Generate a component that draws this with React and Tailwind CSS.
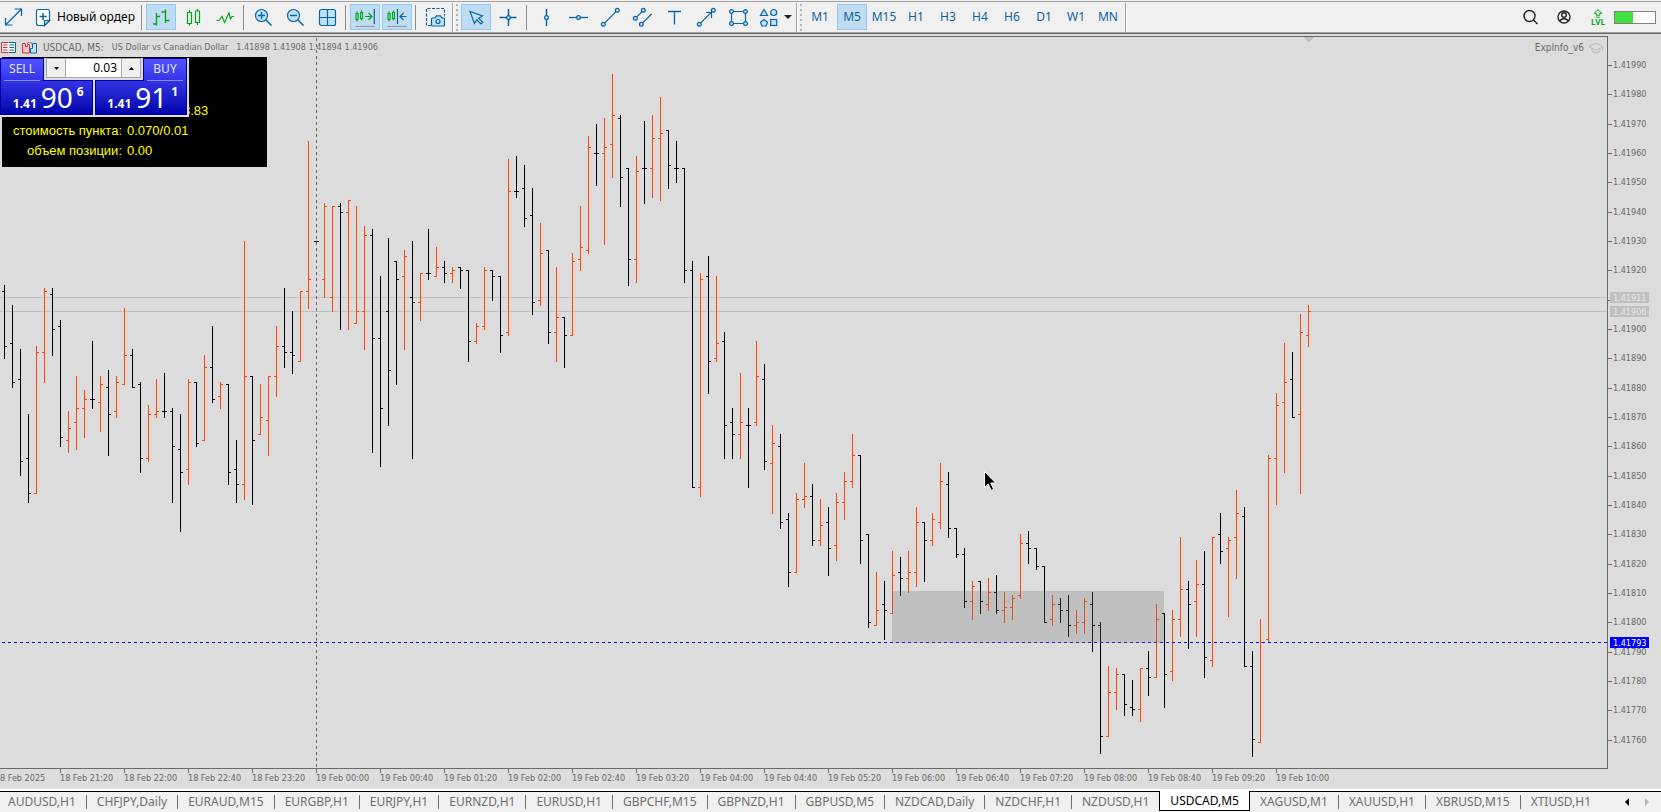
import { useState } from 'react'
import { clsx } from 'clsx'
import { GraduationCap } from 'lucide-react'

const UP = '#ff4500'
const DOWN = '#000000'
const BAR_STEP = 8
const PLOT_TOP = 37

// [up, open, high, low, close]
const BARS = [
  [0, 291, 285, 359, 346], [0, 343, 305, 388, 382], [0, 379, 349, 476, 461], [0, 458, 414, 503, 493],
  [1, 493, 346, 494, 352], [1, 352, 288, 383, 291], [0, 294, 288, 356, 329], [0, 326, 320, 447, 437],
  [1, 440, 411, 453, 428], [1, 422, 376, 450, 408], [1, 408, 390, 438, 399], [0, 399, 341, 409, 399],
  [1, 402, 376, 432, 384], [0, 387, 370, 456, 414], [1, 411, 376, 418, 382], [1, 384, 308, 385, 355],
  [0, 355, 349, 388, 387], [0, 384, 382, 473, 458], [1, 458, 405, 462, 414], [1, 414, 379, 418, 411],
  [0, 411, 373, 418, 411], [0, 411, 408, 503, 446], [0, 449, 414, 532, 472], [1, 469, 379, 485, 382],
  [0, 382, 382, 447, 443], [1, 440, 355, 441, 367], [0, 367, 326, 403, 399], [1, 396, 382, 409, 384],
  [0, 384, 384, 485, 472], [0, 469, 440, 503, 484], [1, 484, 241, 500, 376], [0, 376, 376, 505, 440],
  [1, 434, 384, 435, 417], [1, 420, 376, 456, 376], [1, 376, 326, 397, 346], [0, 346, 288, 368, 352],
  [0, 352, 311, 374, 355], [1, 361, 291, 362, 291], [1, 291, 141, 309, 279], [0, 241, 241, 242, 241],
  [1, 279, 203, 298, 206], [1, 297, 206, 312, 206], [0, 206, 203, 330, 212], [1, 212, 200, 330, 200],
  [1, 323, 206, 324, 311], [1, 311, 226, 350, 235], [0, 235, 229, 453, 338], [0, 338, 276, 467, 408],
  [0, 311, 238, 426, 370], [0, 261, 261, 385, 279], [1, 276, 250, 350, 256], [0, 297, 241, 459, 302],
  [1, 302, 273, 321, 273], [0, 273, 229, 280, 273], [1, 276, 247, 277, 267], [0, 267, 261, 283, 273],
  [1, 273, 267, 283, 270], [0, 267, 267, 289, 270], [0, 270, 270, 362, 341], [1, 341, 323, 344, 326],
  [1, 326, 267, 330, 270], [0, 270, 270, 301, 276], [0, 276, 276, 353, 335], [1, 332, 159, 336, 191],
  [0, 191, 156, 198, 191], [0, 188, 165, 227, 218], [0, 215, 188, 315, 302], [1, 300, 223, 306, 253],
  [0, 250, 250, 344, 332], [1, 332, 267, 362, 317], [0, 317, 317, 368, 335], [1, 335, 253, 336, 261],
  [1, 259, 206, 271, 247], [1, 250, 136, 254, 147], [0, 153, 124, 186, 153], [1, 153, 118, 245, 147],
  [1, 144, 74, 178, 115], [0, 118, 115, 207, 177], [0, 168, 168, 286, 259], [1, 259, 156, 283, 171],
  [0, 168, 121, 204, 168], [1, 168, 115, 198, 138], [1, 138, 97, 201, 133], [0, 130, 130, 189, 165],
  [0, 168, 141, 183, 168], [0, 168, 168, 283, 270], [0, 270, 261, 488, 487], [1, 487, 273, 497, 279],
  [0, 276, 256, 394, 361], [1, 358, 276, 362, 343], [0, 341, 332, 459, 425], [0, 422, 408, 459, 434],
  [1, 434, 373, 459, 422], [0, 425, 408, 488, 425], [1, 422, 341, 426, 376], [0, 379, 364, 470, 461],
  [1, 463, 425, 514, 443], [0, 446, 434, 529, 522], [0, 519, 513, 587, 572], [1, 572, 493, 573, 499],
  [1, 499, 463, 508, 496], [0, 496, 484, 546, 540], [1, 540, 499, 546, 525], [0, 522, 507, 576, 548],
  [1, 545, 493, 561, 502], [1, 502, 472, 520, 481], [1, 481, 434, 488, 455], [0, 455, 455, 564, 540],
  [0, 534, 534, 628, 622], [1, 625, 572, 626, 610], [0, 604, 581, 640, 610], [1, 613, 551, 614, 575],
  [0, 572, 557, 596, 578], [1, 578, 551, 593, 572], [1, 572, 507, 587, 522], [0, 522, 522, 582, 540],
  [1, 540, 513, 546, 519], [1, 522, 463, 529, 481], [0, 484, 472, 538, 528], [0, 528, 528, 558, 554],
  [0, 554, 548, 608, 601], [1, 601, 581, 620, 586], [0, 581, 581, 614, 601], [1, 604, 578, 611, 592],
  [0, 592, 575, 614, 610], [1, 610, 592, 623, 607], [1, 607, 595, 620, 598], [1, 595, 534, 599, 543],
  [0, 543, 531, 564, 548], [0, 548, 548, 570, 566], [0, 566, 566, 623, 622], [1, 619, 595, 626, 604],
  [0, 604, 598, 623, 610], [0, 610, 595, 637, 625], [1, 625, 610, 634, 622], [1, 622, 598, 634, 601],
  [0, 604, 592, 652, 625], [0, 625, 622, 754, 736], [1, 736, 666, 737, 692], [1, 692, 668, 710, 674],
  [0, 674, 674, 716, 704], [0, 707, 680, 716, 709], [1, 709, 668, 722, 668], [0, 668, 651, 696, 677],
  [1, 677, 604, 678, 619], [0, 613, 613, 708, 674], [1, 671, 610, 681, 619], [1, 619, 537, 637, 589],
  [0, 589, 581, 649, 604], [1, 601, 560, 637, 584], [0, 584, 551, 678, 657], [1, 660, 537, 667, 537],
  [0, 534, 513, 564, 551], [1, 548, 537, 617, 540], [1, 537, 490, 579, 513], [0, 516, 507, 667, 666],
  [0, 666, 651, 757, 739], [1, 742, 619, 743, 642], [1, 639, 455, 642, 458], [1, 458, 393, 505, 405],
  [1, 402, 343, 473, 382], [0, 379, 352, 418, 417], [1, 414, 314, 494, 332], [1, 335, 305, 347, 311],
]

const PRICES = Array.from({ length: 24 }, (_, i) => ({
  label: ((141990 - i * 10) / 100000).toFixed(5),
  y: Math.floor(65 + (i * 88) / 3 + 0.4),
}))

const TIMES = [
  '8 Feb 2025', '18 Feb 21:20', '18 Feb 22:00', '18 Feb 22:40', '18 Feb 23:20', '19 Feb 00:00', '19 Feb 00:40',
  '19 Feb 01:20', '19 Feb 02:00', '19 Feb 02:40', '19 Feb 03:20', '19 Feb 04:00', '19 Feb 04:40', '19 Feb 05:20',
  '19 Feb 06:00', '19 Feb 06:40', '19 Feb 07:20', '19 Feb 08:00', '19 Feb 08:40', '19 Feb 09:20', '19 Feb 10:00',
]

const PERIODS = ['M1', 'M5', 'M15', 'H1', 'H3', 'H4', 'H6', 'D1', 'W1', 'MN']

const TABS = [
  'AUDUSD,H1', 'CHFJPY,Daily', 'EURAUD,M15', 'EURGBP,H1', 'EURJPY,H1', 'EURNZD,H1', 'EURUSD,H1', 'GBPCHF,M15',
  'GBPNZD,H1', 'GBPUSD,M5', 'NZDCAD,Daily', 'NZDCHF,H1', 'NZDUSD,H1', 'USDCAD,M5', 'XAGUSD,M1', 'XAUUSD,H1',
  'XBRUSD,M15', 'XTIUSD,H1',
]

const BLUE = '#0a64a4'
const GREEN = '#00a81c'
const PALE = '#bfe3fa'

function Icon({ children, color = BLUE }) {
  return (
    <svg viewBox="0 0 20 20" className="w-5 h-5 shrink-0" fill="none" stroke={color} strokeWidth="1.2">
      {children}
    </svg>
  )
}

function Node({ x, y }) {
  return <circle cx={x} cy={y} r="1.9" fill={PALE} />
}

const ICONS = {
  expand: (
    <Icon>
      <path d="M2.5 18 18.5 2M11.5 2h7v7M2.5 11v7h7" />
    </Icon>
  ),
  order: (
    <Icon>
      <path d="M5.500 2.500h9q2 0 2 2v9l-5 5h-6q-2 0-2-2v-12q0-2 2-2z" fill="#fff" />
      <path d="M16.500 13.500h-5v5z" fill={PALE} />
      <path d="M6.500 9.500h7M10 6v7" strokeWidth="1.5" />
    </Icon>
  ),
  bars: (
    <Icon color={GREEN}>
      <path d="M5.500 6v12.500M2 17h3.500M5.500 9.500h3.500M14.500 2.500v13.500M10.500 5h4M14.500 13.500h4" strokeWidth="1.4" />
    </Icon>
  ),
  candles: (
    <Icon color={GREEN}>
      <path d="M4.500 5.500h4v11h-4zM6.500 3v2.500M6.500 16.500v2M12.500 4h4v11.500h-4zM14.500 2v2M14.500 15.500v2.500" />
    </Icon>
  ),
  line: (
    <Icon color={GREEN}>
      <path d="M1.500 13.500 4 13.500 7 9.500 9.500 15.500 14 6 15.500 12 17 9.500H19" />
    </Icon>
  ),
  zoomIn: (
    <Icon>
      <circle cx="8.500" cy="8.500" r="6" fill={PALE} />
      <path d="M5 8.500h7M8.500 5v7M13 13l5.500 5.500" strokeWidth="1.500" />
    </Icon>
  ),
  zoomOut: (
    <Icon>
      <circle cx="8.500" cy="8.500" r="6" fill={PALE} />
      <path d="M5 8.500h7M13 13l5.500 5.500" strokeWidth="1.500" />
    </Icon>
  ),
  grid: (
    <Icon>
      <rect x="2.500" y="2.500" width="16" height="16" rx="2" fill={PALE} />
      <path d="M10.500 2.500v16M2.500 10.500h16" />
    </Icon>
  ),
  shiftEnd: (
    <Icon color={GREEN}>
      <path d="M1 6.500h2v6h-2zM2 4.500v2M2 12.500v2M5.500 5.500h2v6h-2zM6.500 3.500v2M6.500 11.500v2M10 9.500h7M13.500 6l3.500 3.500-3.500 3.500" />
      <path d="M19.300 2v15" stroke={BLUE} />
      <path d="M0.500 19.500h19" stroke="#999" />
    </Icon>
  ),
  shiftGap: (
    <Icon color={GREEN}>
      <path d="M1 6.500h2v6h-2zM2 4.500v2M2 12.500v2M5.500 5.500h2v6h-2zM6.500 3.500v2M6.500 11.500v2" />
      <path d="M10.500 2v15M19.500 9.500h-6M16.500 6l-3.500 3.500 3.500 3.500" stroke={BLUE} />
      <path d="M0.500 19.500h19" stroke="#999" />
    </Icon>
  ),
  camera: (
    <Icon>
      <path d="M6 18.500h-4.500v-17h18v8" strokeDasharray="3 1.500" />
      <path d="M7.500 11h2.500l1.500-2.200h4l1.500 2.200h1.500q1 0 1 1v6q0 1-1 1h-11q-1 0-1-1v-6q0-1 1-1z" fill={PALE} />
      <circle cx="13" cy="14.500" r="2" />
    </Icon>
  ),
  cursor: (
    <Icon>
      <path d="M4 4.500 8.500 16.500 10.800 12.800 15 17 16.800 15.300 12.700 11.200 16.500 9z" fill={PALE} />
    </Icon>
  ),
  crosshair: (
    <Icon>
      <path d="M1.500 10.500h17M10.500 2v17" strokeWidth="1.500" />
      <Node x={10.5} y={10.5} />
    </Icon>
  ),
  vline: (
    <Icon>
      <path d="M10.500 2v17" strokeWidth="1.500" />
      <Node x={10.5} y={10.5} />
    </Icon>
  ),
  hline: (
    <Icon>
      <path d="M1 10.500h19" strokeWidth="1.300" />
      <Node x={10.5} y={10.5} />
    </Icon>
  ),
  trend: (
    <Icon>
      <path d="M3.300 17.300l14-14" />
      <Node x={3.3} y={17.3} />
      <Node x={17.3} y={3.3} />
    </Icon>
  ),
  channel: (
    <Icon>
      <path d="M3.300 11.300l8-8M9.300 17.300 19.600 7" />
      <Node x={3.3} y={11.3} />
      <Node x={11.3} y={3.3} />
      <Node x={9.3} y={17.3} />
    </Icon>
  ),
  label: (
    <Icon>
      <path d="M4 4.500h13M10.500 4.500v13" strokeWidth="1.300" />
    </Icon>
  ),
  arrow: (
    <Icon>
      <path d="M3.300 17.300l14-14M10 5.500h5.500v5.500" />
      <Node x={3.3} y={17.3} />
      <Node x={17.3} y={3.3} />
    </Icon>
  ),
  rect: (
    <Icon>
      <path d="M3.500 4.500h14v12h-14z" />
      <Node x={3.5} y={4.5} />
      <Node x={17.5} y={4.5} />
      <Node x={3.5} y={16.5} />
      <Node x={17.5} y={16.5} />
    </Icon>
  ),
  shapes: (
    <Icon>
      <path d="M6 2.500l3.500 6h-7z" fill={PALE} />
      <circle cx="15.700" cy="5.500" r="3" fill={PALE} />
      <path d="M6 12.500l3.500 2.700-1.300 3.800h-4.400l-1.300-3.800z" fill={PALE} />
      <rect x="12.700" y="12.500" width="6" height="6" fill={PALE} />
    </Icon>
  ),
}

function ToolButton({ icon, title, active }) {
  return (
    <button
      title={title}
      className={clsx(
        'w-[30px] h-[26px] shrink-0 flex items-center justify-center border',
        active ? 'bg-[#c0dcf3] border-[#90c8f6]' : 'border-transparent',
      )}
    >
      {ICONS[icon]}
    </button>
  )
}

function Separator() {
  return <span className="w-px h-[25px] shrink-0 ml-px mr-0.5 bg-[#8c8c8c]" />
}

// right edge of one toolbar plus the drag handle of the next
function Grip() {
  return (
    <span className="w-[7px] h-[29px] shrink-0 flex items-center justify-between border-l border-[#a0a0a0]">
      <span className="w-px h-full bg-white" />
      <svg width="3" height="27" fill="#b4b4b4">
        {[0, 5, 10, 15, 20, 25].map((y) => (
          <rect key={y} x="0" y={y} width="2" height="2" />
        ))}
      </svg>
    </span>
  )
}

function Toolbar() {
  const [period, setPeriod] = useState('M5')

  return (
    <header className="mt-px h-8 flex items-center gap-0.5 border-t border-t-[#a0a0a0] border-b border-b-[#a0a0a0] bg-[#f0f0f0]">
      <button title="Expand" className="w-[26px] h-[26px] shrink-0 flex items-center justify-center">
        {ICONS.expand}
      </button>
      <button className="w-[110px] h-[26px] shrink-0 flex items-center gap-1 pl-[5px] text-[12px] text-black whitespace-nowrap">
        {ICONS.order}
        Новый ордер
      </button>
      <Separator />
      <ToolButton icon="bars" title="Bars" active />
      <ToolButton icon="candles" title="Candles" />
      <ToolButton icon="line" title="Line" />
      <Separator />
      <ToolButton icon="zoomIn" title="Zoom in" />
      <ToolButton icon="zoomOut" title="Zoom out" />
      <ToolButton icon="grid" title="Tile windows" />
      <Separator />
      <ToolButton icon="shiftEnd" title="Auto scroll" active />
      <ToolButton icon="shiftGap" title="Chart shift" active />
      <Separator />
      <ToolButton icon="camera" title="Screenshot" />
      <Grip />
      <ToolButton icon="cursor" title="Cursor" active />
      <ToolButton icon="crosshair" title="Crosshair" />
      <Separator />
      <ToolButton icon="vline" title="Vertical line" />
      <ToolButton icon="hline" title="Horizontal line" />
      <ToolButton icon="trend" title="Trend line" />
      <ToolButton icon="channel" title="Channel" />
      <ToolButton icon="label" title="Text" />
      <ToolButton icon="arrow" title="Arrow" />
      <ToolButton icon="rect" title="Rectangle" />
      <button title="Objects" className="w-[39px] h-[26px] shrink-0 flex items-center gap-1.5 pl-[3px]">
        {ICONS.shapes}
        <svg width="8" height="5" className="shrink-0">
          <path d="M0 0h8l-4 4z" fill="#222" />
        </svg>
      </button>
      <Grip />
      {PERIODS.map((p) => (
        <button
          key={p}
          onClick={() => setPeriod(p)}
          className={clsx(
            'w-[30px] h-[26px] shrink-0 flex items-center justify-center border text-[12px] text-[#0a64a4]',
            p === period ? 'bg-[#c0dcf3] border-[#90c8f6]' : 'border-transparent',
          )}
        >
          {p}
        </button>
      ))}
      <span className="w-0.5 h-[29px] shrink-0 border-l border-[#a0a0a0] bg-white" />

      <div className="ml-auto mr-[5px] flex items-center gap-[3px]">
        <div className="flex gap-2">
          <button title="Search" className="w-[26px] h-[26px] flex items-center justify-center">
            <Icon color="#222">
              <circle cx="9.500" cy="9" r="5.500" strokeWidth="1.400" />
              <path d="M13.500 13l4 4" strokeWidth="1.500" />
            </Icon>
          </button>
          <button title="Account" className="w-[26px] h-[26px] flex items-center justify-center">
            <Icon color="#222">
              <circle cx="10" cy="10" r="6" strokeWidth="1.400" />
              <circle cx="10" cy="8" r="2.300" strokeWidth="1.400" />
              <path d="M5.800 14.200q1-2.500 4.200-2.500t4.200 2.500" strokeWidth="1.400" />
            </Icon>
          </button>
          <button title="Level" className="w-[26px] h-[26px] flex flex-col items-center justify-center text-[#00a81c]">
            <svg width="10" height="9" viewBox="0 0 10 9" fill="none" stroke="currentColor">
              <path d="M5 .7 1.200 4.300h2v2h3.600v-2h2zM3.200 8.200h3.600" />
            </svg>
            <span className="text-[8px] leading-[8px] font-bold">LVL</span>
          </button>
        </div>
        <span className="w-[42px] h-[13px] border border-[#808080] bg-white">
          <span className="block w-[18px] h-full bg-[#40e040]" />
        </span>
      </div>
    </header>
  )
}

function Bar({ bar, x }) {
  const [up, open, high, low, close] = bar
  return (
    <g fill={up ? UP : DOWN}>
      <rect x={x} y={high} width="1" height={low - high} />
      <rect x={x - 2} y={open} width="2" height="1" />
      <rect x={x + 1} y={close} width="2" height="1" />
    </g>
  )
}

function Plot() {
  return (
    <svg className="absolute inset-0 w-full h-full" shapeRendering="crispEdges">
      <g transform={`translate(0 ${-PLOT_TOP})`}>
        <rect x="0" y="297" width="100%" height="1" fill="#c0c0c0" />
        <rect x="0" y="311" width="100%" height="1" fill="#c0c0c0" />
        <path d="M1303 37h11l-5 5h-1z" fill="#c0c0c0" />
        <line x1="316.500" y1="38" x2="316.500" y2="768" stroke="#696969" strokeDasharray="3 3" />
        {BARS.map((bar, i) => (
          <Bar key={i} bar={bar} x={4 + i * BAR_STEP} />
        ))}
        <line x1="2" y1="642.500" x2="100%" y2="642.500" stroke="#0000ff" strokeDasharray="3 3" />
        <rect x="892" y="591" width="272" height="52" fill="#757575" opacity="0.27" />
        <path
          d="M984.500 471.500v16l3.700-3.500 3 6.500 2.500-1.200-3-6.300h5z"
          fill="#000"
          stroke="#fff"
          shapeRendering="geometricPrecision"
        />
      </g>
    </svg>
  )
}

function PriceTag({ y, text, className }) {
  return (
    <span className={clsx('absolute left-0.5 w-[39px] h-[11px] pl-[3px] leading-[12px]', className)} style={{ top: y - PLOT_TOP }}>
      {text}
    </span>
  )
}

function PriceAxis() {
  return (
    <div className="relative w-[53px] shrink-0 overflow-hidden">
      {PRICES.map((p) => (
        <div key={p.label} className="absolute left-0 flex items-center h-[13px] leading-[13px]" style={{ top: p.y - 5 - PLOT_TOP }}>
          <span className="w-1 h-px mr-px bg-[#696969]" />
          {p.label}
        </div>
      ))}
      <PriceTag y={293} text="1.41911" className="bg-[#c0c0c0] text-[#e8e8e8]" />
      <PriceTag y={307} text="1.41906" className="bg-[#c0c0c0] text-[#e8e8e8]" />
      <PriceTag y={638} text="1.41793" className="bg-[#0000ff] text-white" />
    </div>
  )
}

function TimeAxis() {
  return (
    <div className="h-5 flex overflow-hidden">
      {TIMES.map((t, i) => (
        <div key={t} className={clsx('shrink-0 whitespace-nowrap', i === 0 ? 'w-[60px]' : 'w-16')}>
          <span className={clsx('block w-px h-1', i > 0 && 'bg-[#696969]')} />
          <span className="block leading-[11px]">{t}</span>
        </div>
      ))}
    </div>
  )
}

function Quote({ base, pips, point }) {
  return (
    <button className="h-[35px] flex-1 flex items-end justify-center gap-1 pl-1 border border-[#0000a0] bg-linear-to-b from-[#3232e4] to-[#0000aa] text-white">
      <span className="text-[12px] leading-[20px] font-bold">{base}</span>
      <span className="text-[28px] leading-[33px]">{pips}</span>
      <span className="self-start text-[12px] leading-[22px] font-bold">{point}</span>
    </button>
  )
}

function SideButton({ children }) {
  return (
    <button className="relative z-10 w-11 h-[23px] px-[3px] flex flex-col justify-between border border-b-0 border-[#0000a0] bg-linear-to-b from-[#5454ff] to-[#3232e4] text-[12px] leading-[20px] text-[#e4e4ff]">
      <span className="w-full text-center">{children}</span>
      <span className="w-full h-px shrink-0 bg-[#8c8cff]" />
    </button>
  )
}

function TradePanel() {
  const [volume, setVolume] = useState(0.03)
  const step = (d) => setVolume((v) => Math.max(0.01, v + d))

  return (
    <div className="absolute left-0 top-[21px] w-[189px] h-[59px] pr-0.5 bg-[#dcdcdc]">
      <div className="flex justify-between">
        <SideButton>SELL</SideButton>
        <div className="w-[95px] h-5 flex border border-[#a8a8a8] bg-white">
          <button aria-label="Decrease volume" onClick={() => step(-0.01)} className="w-[19px] flex items-center justify-center border-r border-[#a8a8a8] bg-[#f0f0f0]">
            <svg width="5" height="3"><path d="M0 0h5l-2.500 3z" /></svg>
          </button>
          <input
            aria-label="Volume"
            value={volume.toFixed(2)}
            readOnly
            className="w-0 flex-1 pr-1 text-right text-[12px] text-black outline-none"
          />
          <button aria-label="Increase volume" onClick={() => step(0.01)} className="w-[19px] flex items-center justify-center border-l border-[#a8a8a8] bg-[#f0f0f0]">
            <svg width="5" height="3"><path d="M0 3h5l-2.500-3z" /></svg>
          </button>
        </div>
        <SideButton>BUY</SideButton>
      </div>
      <div className="flex gap-0.5 -mt-px">
        <Quote base="1.41" pips="90" point="6" />
        <Quote base="1.41" pips="91" point="1" />
      </div>
    </div>
  )
}

function InfoRow({ label, children }) {
  return (
    <div className="flex gap-[5px]">
      <span className="w-[120px] text-right">{label}</span>
      <span>{children}</span>
    </div>
  )
}

function InfoPanel() {
  return (
    <div className="absolute left-0.5 top-5 w-[265px] h-[110px] pt-11 bg-black text-[#ffff00] text-[13px] leading-[20px] font-['Liberation_Sans',sans-serif] whitespace-nowrap">
      <InfoRow>
        <span className="pl-14">8.83</span>
      </InfoRow>
      <InfoRow label="стоимость пункта:">0.070/0.01</InfoRow>
      <InfoRow label="объем позиции:">0.00</InfoRow>
    </div>
  )
}

function ChartCaption() {
  return (
    <div className="relative h-5 flex items-center pt-px pr-[3px] whitespace-nowrap">
      <svg width="16" height="12" viewBox="0 0 16 12" fill="none" className="ml-px mr-[5px]">
        <path d="M7.500 .5h-7v10h7" fill="#fff" stroke="#dc3232" />
        <path d="M8 .5h6.500v10h-6.500" fill="#fff" stroke={BLUE} />
        <path d="M2 3h4.500M2 5.500h4.500M2 8h4.500" stroke="#dc3232" />
        <path d="M8.500 3h4.500M8.500 5.500h4.500M8.500 8h4.500" stroke={BLUE} />
      </svg>
      <svg width="16" height="12" viewBox="0 0 16 12" fill="none" className="mr-[5px]">
        <path d="M.5 1.500h3v3h2v-2h2v8.500h-7z" fill="#ffc8c8" stroke="#dc3232" />
        <path d="M8.500 6.500h2v-5h4v9.500h-6z" fill={PALE} stroke={BLUE} />
        <path d="M5.500 2.500v-2h4v2" stroke="#969696" />
      </svg>
      <span className="mr-2 text-[10px]">USDCAD, M5:</span>
      <span className="mr-2">US Dollar vs Canadian Dollar</span>
      <span>1.41898 1.41908 1.41894 1.41906</span>
      <span className="ml-auto mr-1 text-[10px]">ExpInfo_v6</span>
      <GraduationCap className="w-4 h-4 text-[#b8b8b8]" strokeWidth={1.5} />
    </div>
  )
}

function ChartTabs() {
  const [active, setActive] = useState('USDCAD,M5')
  const activeIndex = TABS.indexOf(active)

  return (
    <nav className="h-[21px] flex border-t border-black bg-[#f0f0f0] text-[12px] text-[#6e6e6e]">
      {TABS.map((tab, i) => {
        const divided = i !== activeIndex - 1 && i !== TABS.length - 1
        return (
          <button
            key={tab}
            onClick={() => setActive(tab)}
            className={clsx(
              'flex items-center h-5 whitespace-nowrap leading-[18px]',
              tab === active && '-mt-px border border-t-0 border-black bg-white text-black',
            )}
          >
            <span className={clsx(i === 0 ? 'pl-2 pr-2.5' : 'px-2.5')}>{tab}</span>
            {tab !== active && divided && <span className="w-px h-3.5 bg-[#6e6e6e]" />}
          </button>
        )
      })}
      <div className="ml-auto mr-3 flex items-center gap-4">
        <button aria-label="Scroll tabs left">
          <svg width="4" height="8"><path d="M4 0v8l-4-4z" fill="#000" /></svg>
        </button>
        <button aria-label="Scroll tabs right">
          <svg width="4" height="8"><path d="M0 0v8l4-4z" fill="#b4b4b4" /></svg>
        </button>
      </div>
    </nav>
  )
}

export default function App() {
  return (
    <div className="min-h-screen flex flex-col overflow-hidden bg-[#f0f0f0] font-['Noto_Sans',sans-serif]">
      <Toolbar />
      <main className="flex-1 flex flex-col border-t border-[#696969] bg-[#dcdcdc] text-[9px] text-[#696969] font-['DejaVu_Sans_Condensed','DejaVu_Sans',sans-serif]">
        <div className="flex-1 flex pt-0.5">
          <div className="relative flex-1 border-t border-r border-b border-[#696969] overflow-hidden">
            <Plot />
            <ChartCaption />
            <div className="font-['Noto_Sans',sans-serif]">
              <InfoPanel />
              <TradePanel />
            </div>
          </div>
          <PriceAxis />
        </div>
        <TimeAxis />
        <div className="h-0.5 bg-white" />
      </main>
      <ChartTabs />
    </div>
  )
}
